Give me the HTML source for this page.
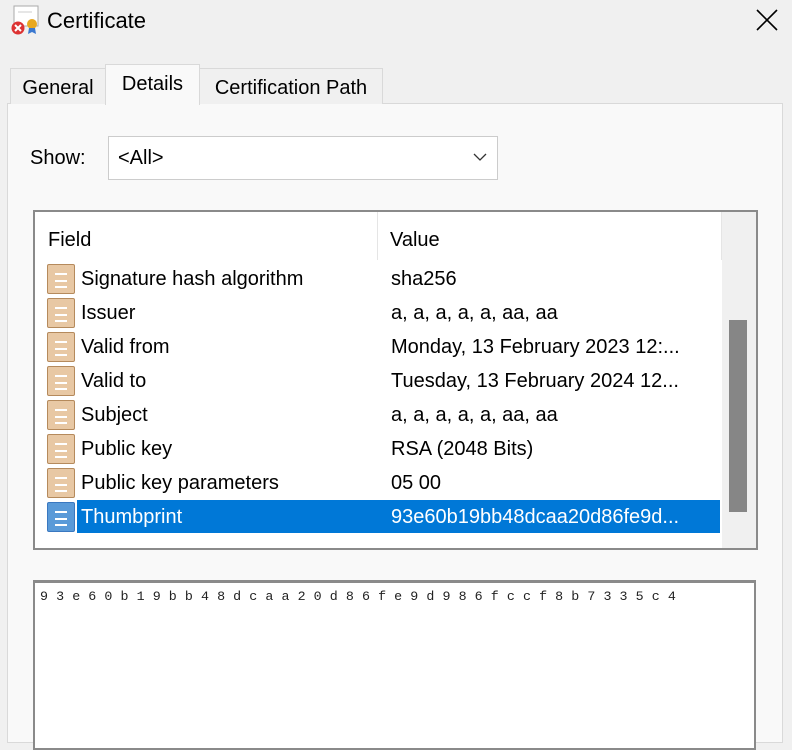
<!DOCTYPE html>
<html><head><style>
body{margin:0;width:792px;height:730px;background:#f0f0f0;font-family:"Liberation Sans",sans-serif;position:relative;overflow:hidden;color:#000}
.a{position:absolute}
.tab{position:absolute;font-size:20px;border:1px solid #d9d9d9;border-bottom:none;background:#f0f0f0;box-sizing:border-box;text-align:center}
.row{position:absolute;left:0;height:34px;width:690px;font-size:20px}
.row .ic{position:absolute;left:12px;top:2px;width:28px;height:30px;background:#e8c8a4;border:1px solid #b58a5c;box-sizing:border-box;border-radius:2px}
.row .ic:after{content:"";position:absolute;left:7px;top:8px;width:12px;height:11px;border-top:2px solid #fff;border-bottom:2px solid #fff;background:linear-gradient(#fff,#fff) 0 4.5px/12px 2px no-repeat}
.row .f{position:absolute;left:46px;top:6px}
.row .v{position:absolute;left:356px;top:6px}
</style></head><body>
<svg class="a" style="left:10px;top:4px" width="32" height="32"><rect x="4" y="2" width="24" height="20" fill="#fff" stroke="#aaa"/><line x1="8" y1="8" x2="22" y2="8" stroke="#ccc"/><circle cx="22" cy="20" r="5" fill="#e8a820"/><path d="M19 24l-1 6 4-2 4 2-1-6" fill="#3a78d0"/><circle cx="8" cy="24" r="6.5" fill="#d33"/><path d="M5 21l6 6M11 21l-6 6" stroke="#fff" stroke-width="2"/></svg>
<div class="a" style="left:47px;top:8px;font-size:22px">Certificate</div>
<svg class="a" style="left:756px;top:9px" width="22" height="22"><path d="M1 1L21 21M21 1L1 21" stroke="#000" stroke-width="1.6"/></svg>
<div class="a" style="left:7px;top:103px;width:776px;height:640px;background:#f9f9f9;border:1px solid #d9d9d9;box-sizing:border-box"></div>
<div class="tab" style="left:10px;top:68px;width:96px;height:36px;padding-top:8px">General</div>
<div class="tab" style="left:199px;top:68px;width:184px;height:36px;padding-top:8px">Certification Path</div>
<div class="tab" style="left:105px;top:64px;width:95px;height:41px;padding-top:8px;background:#f9f9f9">Details</div>
<div class="a" style="left:30px;top:147px;font-size:20px">Show:</div>
<div class="a" style="left:108px;top:136px;width:390px;height:44px;background:#fff;border:1px solid #ccc;box-sizing:border-box;font-size:20px;padding:10px 0 0 9px">&lt;All&gt;</div>
<svg class="a" style="left:473px;top:153px" width="14" height="9"><path d="M1 1l6 6 6-6" stroke="#333" fill="none" stroke-width="1.3"/></svg>
<div class="a" style="left:33px;top:210px;width:725px;height:340px;background:#fff;border:2px solid #8a8a8a;box-sizing:border-box">
 <div class="a" style="left:13px;top:17px;font-size:20px">Field</div>
 <div class="a" style="left:342px;top:0;width:1px;height:48px;background:#e5e5e5"></div>
 <div class="a" style="left:355px;top:17px;font-size:20px">Value</div>
 <div class="a" style="left:686px;top:0;width:1px;height:48px;background:#e5e5e5"></div>
 <div class="a" style="left:687px;top:0;width:34px;height:336px;background:#f0f0f0"></div>
 <div class="a" style="left:694px;top:108px;width:18px;height:192px;background:#868686"></div>
 <div style="position:absolute;left:0;top:50px">
  <div class="row" style="top:0"><div class="ic"></div><span class="f">Signature hash algorithm</span><span class="v">sha256</span></div>
  <div class="row" style="top:34px"><div class="ic"></div><span class="f">Issuer</span><span class="v">a, a, a, a, a, aa, aa</span></div>
  <div class="row" style="top:68px"><div class="ic"></div><span class="f">Valid from</span><span class="v">Monday, 13 February 2023 12:...</span></div>
  <div class="row" style="top:102px"><div class="ic"></div><span class="f">Valid to</span><span class="v">Tuesday, 13 February 2024 12...</span></div>
  <div class="row" style="top:136px"><div class="ic"></div><span class="f">Subject</span><span class="v">a, a, a, a, a, aa, aa</span></div>
  <div class="row" style="top:170px"><div class="ic"></div><span class="f">Public key</span><span class="v">RSA (2048 Bits)</span></div>
  <div class="row" style="top:204px"><div class="ic"></div><span class="f">Public key parameters</span><span class="v">05 00</span></div>
  <div class="row" style="top:238px"><div class="a" style="left:42px;top:0;width:643px;height:33px;background:#0078d7"></div><div class="ic" style="background:#5a9ad8;border-color:#3a78c0"></div><span class="f" style="color:#fff">Thumbprint</span><span class="v" style="color:#fff">93e60b19bb48dcaa20d86fe9d...</span></div>
 </div>
</div>
<div class="a" style="left:33px;top:580px;width:723px;height:170px;background:#fff;border:2px solid #8a8a8a;border-top-width:3px;box-sizing:border-box">
 <div class="a" style="left:5px;top:6px;font-family:'Liberation Mono',monospace;font-size:13.3px;letter-spacing:0.07px;color:#222">9 3 e 6 0 b 1 9 b b 4 8 d c a a 2 0 d 8 6 f e 9 d 9 8 6 f c c f 8 b 7 3 3 5 c 4</div>
</div>
</body></html>
